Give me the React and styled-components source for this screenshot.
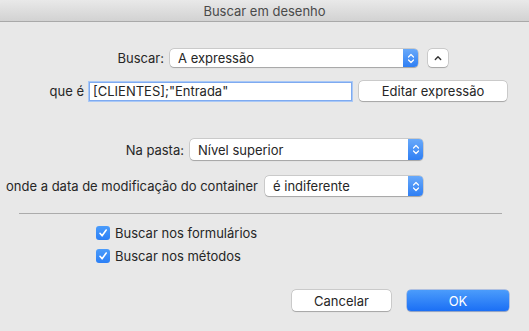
import React from 'react'
import styled, { createGlobalStyle } from 'styled-components'

const GlobalStyle = createGlobalStyle`
  html, body {
    margin: 0;
    padding: 0;
    background: #e8e8e8;
  }
  body {
    font-family: Inter, "Liberation Sans", Arial, sans-serif;
    font-size: 13px;
    color: #262626;
  }
`

const Window = styled.div`
  width: 529px;
  height: 331px;
  background: #e8e8e8;
  border-radius: 5px 5px 0 0;
  overflow: hidden;
  display: flex;
  flex-direction: column;
`

const TitleBar = styled.div`
  height: 21px;
  flex: none;
  border-bottom: 1px solid #a9a9a9;
  background: linear-gradient(#e9e9e9, #d2d2d2);
  display: flex;
  align-items: center;
  justify-content: center;
  color: #4a4a4a;
  font-size: 13px;
`

const Body = styled.div`
  display: flex;
  flex-direction: column;
`

const Row = styled.div`
  display: flex;
  align-items: center;
  height: ${p => p.$h || 20}px;
  margin-top: ${p => p.$top}px;
`

const Label = styled.div`
  width: ${p => p.$w}px;
  margin-right: ${p => p.$gap}px;
  text-align: right;
  white-space: nowrap;
  flex: none;
`

const SelectBox = styled.div`
  width: ${p => p.$w}px;
  height: ${p => p.$h || 20}px;
  box-sizing: border-box;
  background: #fff;
  border-radius: 4px;
  box-shadow: 0 0 0 0.5px rgba(0,0,0,0.22), 0 0.5px 1px rgba(0,0,0,0.2);
  display: flex;
  align-items: center;
  overflow: hidden;
  flex: none;
`

const SelectText = styled.span`
  flex: 1;
  padding-left: 8px;
  white-space: nowrap;
`

const Stepper = styled.div`
  width: 15px;
  align-self: stretch;
  background: linear-gradient(#68a9fa, #2f7ff4);
  display: flex;
  align-items: center;
  justify-content: center;
`

const Chevrons = () => (
  <svg width="8" height="11" viewBox="0 0 8 11">
    <path d="M1.5 4 L4 1.5 L6.5 4 M1.5 7 L4 9.5 L6.5 7" stroke="#fff" strokeWidth="1.2" fill="none" strokeLinecap="round" strokeLinejoin="round" />
  </svg>
)

const Select = ({ w, h, children }) => (
  <SelectBox $w={w} $h={h}>
    <SelectText>{children}</SelectText>
    <Stepper><Chevrons /></Stepper>
  </SelectBox>
)

const SmallButton = styled.div`
  width: 20px;
  height: 18px;
  margin-left: 10px;
  background: #fff;
  border-radius: 4px;
  box-shadow: 0 0 0 0.5px rgba(0,0,0,0.22), 0 0.5px 1px rgba(0,0,0,0.2);
  display: flex;
  align-items: center;
  justify-content: center;
`

const Field = styled.div`
  width: ${p => p.$w}px;
  height: 19px;
  box-sizing: border-box;
  background: #fff;
  border: 1px solid #7eaaf0;
  box-shadow: 0 0 0 1px #a9c8f6;
  padding-left: 3px;
  display: flex;
  align-items: center;
  white-space: nowrap;
  flex: none;
`

const Button = styled.div`
  width: ${p => p.$w}px;
  height: ${p => p.$h || 20}px;
  margin-left: ${p => p.$ml || 0}px;
  box-sizing: border-box;
  border-radius: 4px;
  display: flex;
  align-items: center;
  justify-content: center;
  flex: none;
  background: ${p => (p.$primary ? 'linear-gradient(#4b9cfb, #1b6ff5)' : '#fff')};
  color: ${p => (p.$primary ? '#fff' : '#262626')};
  box-shadow: ${p => (p.$primary
    ? '0 0 0 0.5px rgba(20,90,220,0.5), 0 0.5px 1px rgba(0,0,0,0.2)'
    : '0 0 0 0.5px rgba(0,0,0,0.22), 0 0.5px 1px rgba(0,0,0,0.2)')};
`

const Separator = styled.div`
  height: 1px;
  margin: 17px 27px 0 19px;
  background: #ababab;
`

const CheckRow = styled.div`
  display: flex;
  align-items: center;
  height: 16px;
  margin-top: ${p => p.$top}px;
  padding-left: 96px;
`

const CheckBox = styled.div`
  width: 14px;
  height: 14px;
  border-radius: 3px;
  background: linear-gradient(#4b9cfb, #2b7ff6);
  display: flex;
  align-items: center;
  justify-content: center;
  margin-right: 5px;
  flex: none;
`

const Tick = () => (
  <svg width="10" height="10" viewBox="0 0 10 10">
    <path d="M2 5.3 L4.1 7.8 L8.2 2" stroke="#fff" strokeWidth="1.6" fill="none" strokeLinecap="round" strokeLinejoin="round" />
  </svg>
)

const Footer = styled.div`
  display: flex;
  justify-content: flex-end;
  margin-top: 26px;
  padding-right: 20px;
`

export default function App() {
  return (
    <>
      <GlobalStyle />
      <Window>
        <TitleBar>Buscar em desenho</TitleBar>
        <Body>
          <Row $top={26}>
            <Label $w={164} $gap={6}>Buscar:</Label>
            <Select w={248} h={18}>A expressão</Select>
            <SmallButton>
              <svg width="8" height="6" viewBox="0 0 8 6">
                <path d="M1.3 4.5 L4 1.8 L6.7 4.5" stroke="#333" strokeWidth="1.4" fill="none" strokeLinecap="round" strokeLinejoin="round" />
              </svg>
            </SmallButton>
          </Row>
          <Row $top={13}>
            <Label $w={84} $gap={5}>que é</Label>
            <Field $w={263}>[CLIENTES];"Entrada"</Field>
            <Button $w={148} $ml={7}>Editar expressão</Button>
          </Row>
          <Row $top={38} $h={21}>
            <Label $w={184} $gap={6}>Na pasta:</Label>
            <Select w={233} h={21}>Nível superior</Select>
          </Row>
          <Row $top={16}>
            <Label $w={258} $gap={7}>onde a data de modificação do container</Label>
            <Select w={158}>é indiferente</Select>
          </Row>
          <Separator />
          <CheckRow $top={11}>
            <CheckBox><Tick /></CheckBox>
            Buscar nos formulários
          </CheckRow>
          <CheckRow $top={7}>
            <CheckBox><Tick /></CheckBox>
            Buscar nos métodos
          </CheckRow>
          <Footer>
            <Button $w={99} $h={21}>Cancelar</Button>
            <Button $w={102} $h={21} $ml={16} $primary>OK</Button>
          </Footer>
        </Body>
      </Window>
    </>
  )
}
